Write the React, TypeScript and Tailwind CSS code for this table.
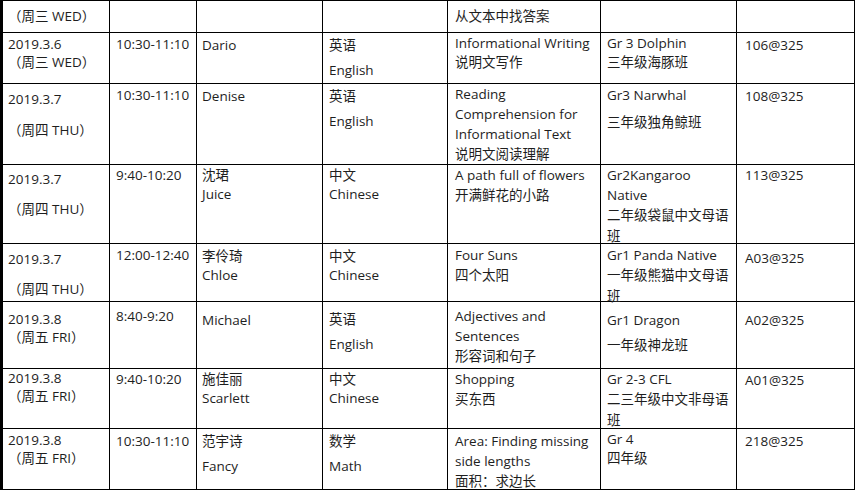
type Line = { t: string; c?: string };
type Cell = { pt: string; lines: Line[]; lh?: string };
type Row = { h: string; cells: Cell[] };

const L = (t: string, c?: string): Line => ({ t, c });

const widths = ["w-[107px]", "w-[87px]", "w-[126px]", "w-[125px]", "w-[153px]", "w-[136px]", "w-[118px]"];
const pads = ["pl-[5px]", "pl-[6px]", "pl-[5px]", "pl-[6px]", "pl-[7px]", "pl-[6px]", "pl-[8px]"];

const rows: Row[] = [
  {
    h: "h-[32px]",
    cells: [
      { pt: "pt-[5px]", lines: [L("（周三  WED）")] },
      { pt: "", lines: [] },
      { pt: "", lines: [] },
      { pt: "", lines: [] },
      { pt: "pt-[5px]", lines: [L("从文本中找答案")] },
      { pt: "", lines: [] },
      { pt: "", lines: [] },
    ],
  },
  {
    h: "h-[51px]",
    cells: [
      { pt: "pt-[2px]", lh: "leading-[18px]", lines: [L("2019.3.6"), L("（周三  WED）")] },
      { pt: "pt-[1px]", lines: [L("10:30-11:10")] },
      { pt: "pt-[2px]", lines: [L("Dario")] },
      { pt: "pt-[2px]", lines: [L("英语"), L("English", "mt-[5px]")] },
      { pt: "pt-[1px]", lh: "leading-[19px]", lines: [L("Informational Writing"), L("说明文写作")] },
      { pt: "pt-[1px]", lh: "leading-[19px]", lines: [L("Gr 3 Dolphin"), L("三年级海豚班")] },
      { pt: "pt-[2px]", lines: [L("106@325")] },
    ],
  },
  {
    h: "h-[81px]",
    cells: [
      { pt: "pt-[5px]", lines: [L("2019.3.7"), L("（周四 THU）", "mt-[11px]")] },
      { pt: "pt-[1px]", lines: [L("10:30-11:10")] },
      { pt: "pt-[2px]", lines: [L("Denise")] },
      { pt: "pt-[2px]", lines: [L("英语"), L("English", "mt-[5px]")] },
      {
        pt: "pt-0",
        lines: [L("Reading"), L("Comprehension for"), L("Informational Text"), L("说明文阅读理解")],
      },
      { pt: "pt-[1px]", lines: [L("Gr3 Narwhal"), L("三年级独角鲸班", "mt-[7px]")] },
      { pt: "pt-[2px]", lines: [L("108@325")] },
    ],
  },
  {
    h: "h-[79px]",
    cells: [
      { pt: "pt-[4px]", lines: [L("2019.3.7"), L("（周四 THU）", "mt-[10px]")] },
      { pt: "pt-0", lines: [L("9:40-10:20")] },
      { pt: "pt-[1px]", lh: "leading-[19px]", lines: [L("沈珺"), L("Juice")] },
      { pt: "pt-[1px]", lh: "leading-[19px]", lines: [L("中文"), L("Chinese")] },
      { pt: "pt-0", lines: [L("A path full of flowers"), L("开满鲜花的小路")] },
      {
        pt: "pt-0",
        lines: [L("Gr2Kangaroo"), L("Native"), L("二年级袋鼠中文母语"), L("班", "mt-[1px]")],
      },
      { pt: "pt-0", lines: [L("113@325")] },
    ],
  },
  {
    h: "h-[58px]",
    cells: [
      { pt: "pt-[5px]", lines: [L("2019.3.7"), L("（周四 THU）", "mt-[10px]")] },
      { pt: "pt-[1px]", lines: [L("12:00-12:40")] },
      { pt: "pt-[3px]", lh: "leading-[19px]", lines: [L("李伶琦"), L("Chloe")] },
      { pt: "pt-[3px]", lh: "leading-[19px]", lines: [L("中文"), L("Chinese")] },
      { pt: "pt-[1px]", lines: [L("Four Suns"), L("四个太阳")] },
      { pt: "pt-[1px]", lines: [L("Gr1 Panda Native"), L("一年级熊猫中文母语"), L("班", "mt-[1px]")] },
      { pt: "pt-[4px]", lines: [L("A03@325")] },
    ],
  },
  {
    h: "h-[67px]",
    cells: [
      { pt: "pt-[8px]", lh: "leading-[18px]", lines: [L("2019.3.8"), L("（周五  FRI）")] },
      { pt: "pt-[4px]", lines: [L("8:40-9:20")] },
      { pt: "pt-[8px]", lines: [L("Michael")] },
      { pt: "pt-[7px]", lines: [L("英语"), L("English", "mt-[5px]")] },
      { pt: "pt-[4px]", lines: [L("Adjectives and"), L("Sentences"), L("形容词和句子")] },
      { pt: "pt-[8px]", lines: [L("Gr1 Dragon"), L("一年级神龙班", "mt-[5px]")] },
      { pt: "pt-[8px]", lines: [L("A02@325")] },
    ],
  },
  {
    h: "h-[60px]",
    cells: [
      { pt: "pt-0", lh: "leading-[18px]", lines: [L("2019.3.8"), L("（周五 FRI）")] },
      { pt: "pt-0", lines: [L("9:40-10:20")] },
      { pt: "pt-[1px]", lh: "leading-[19px]", lines: [L("施佳丽"), L("Scarlett")] },
      { pt: "pt-[1px]", lh: "leading-[19px]", lines: [L("中文"), L("Chinese")] },
      { pt: "pt-0", lines: [L("Shopping"), L("买东西")] },
      { pt: "pt-0", lines: [L("Gr 2-3 CFL"), L("二三年级中文非母语"), L("班", "mt-[1px]")] },
      { pt: "pt-[1px]", lines: [L("A01@325")] },
    ],
  },
  {
    h: "h-[61px]",
    cells: [
      { pt: "pt-[2px]", lh: "leading-[18px]", lines: [L("2019.3.8"), L("（周五 FRI）")] },
      { pt: "pt-[2px]", lines: [L("10:30-11:10")] },
      { pt: "pt-[2px]", lines: [L("范宇诗"), L("Fancy", "mt-[5px]")] },
      { pt: "pt-[2px]", lines: [L("数学"), L("Math", "mt-[5px]")] },
      { pt: "pt-[2px]", lines: [L("Area: Finding missing"), L("side lengths"), L("面积：求边长")] },
      { pt: "pt-[1px]", lh: "leading-[19px]", lines: [L("Gr 4"), L("四年级")] },
      { pt: "pt-[2px]", lines: [L("218@325")] },
    ],
  },
];

export default function App() {
  return (
    <div
      className="w-[857px] h-[491px] bg-white overflow-hidden text-[#1e1e1e] text-[13.5px] leading-[20px]"
      style={{ fontFamily: '"Open Sans", "Noto Sans CJK SC", sans-serif' }}
    >
      <div className="w-[855px] border-t border-l-[3px] border-black">
        {rows.map((row, ri) => (
          <div key={ri} className={`flex border-b border-black ${row.h}`}>
            {row.cells.map((cell, ci) => (
              <div
                key={ci}
                className={`flex flex-col shrink-0 border-r border-black whitespace-nowrap ${widths[ci]} ${pads[ci]} ${cell.pt} ${cell.lh ?? ""}`}
              >
                {cell.lines.map((ln, li) => (
                  <div key={li} className={ln.c ?? ""}>
                    {ln.t}
                  </div>
                ))}
              </div>
            ))}
          </div>
        ))}
      </div>
    </div>
  );
}
